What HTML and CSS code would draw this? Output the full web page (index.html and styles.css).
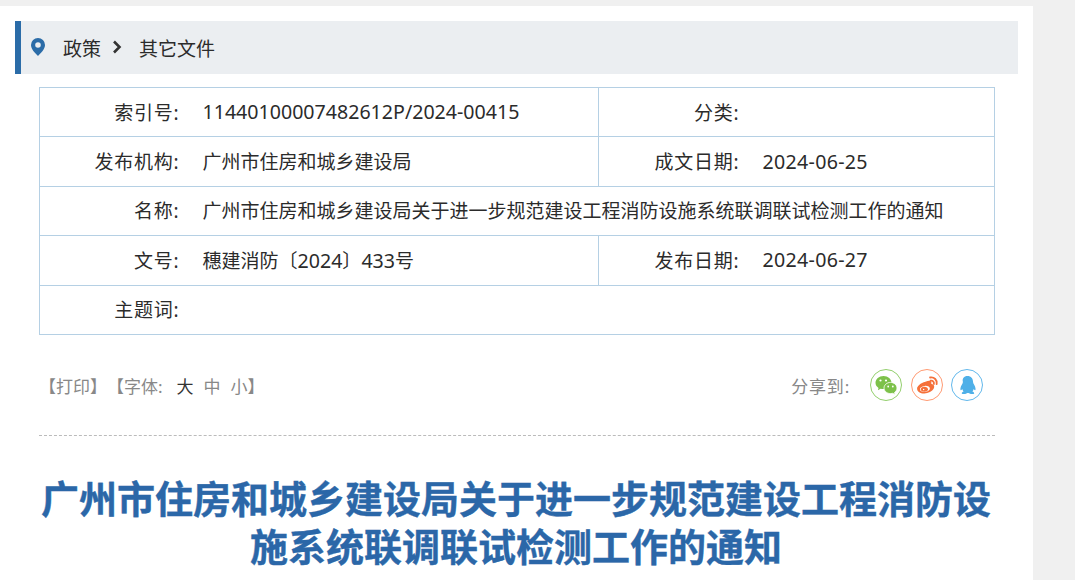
FILE: index.html
```html
<!DOCTYPE html>
<html lang="zh-CN">
<head>
<meta charset="utf-8">
<title>广州市住房和城乡建设局关于进一步规范建设工程消防设施系统联调联试检测工作的通知</title>
<link rel="stylesheet" href="styles.css">
</head>
<body>
<div class="shell">
<main class="panel">
  <nav class="crumbs">
    <svg class="pin" viewBox="0 0 14 18" width="14" height="18"><path fill="#2b6ca8" fill-rule="evenodd" d="M7 0a7 7 0 0 1 7 7c0 4-4 8-7 11C4 15 0 11 0 7a7 7 0 0 1 7-7zm0 4.200a2.800 2.800 0 1 0 0 5.600 2.800 2.800 0 0 0 0-5.600z"/></svg>
    <span class="crumb">政策</span>
    <svg class="chev" viewBox="0 0 10 14" width="10" height="14"><path fill="none" stroke="#333" stroke-width="2.600" d="M2 1.500 7.500 7 2 12.500"/></svg>
    <span class="crumb">其它文件</span>
  </nav>
  <table class="meta">
    <colgroup><col class="c1"><col class="c2"><col class="c3"><col class="c4"></colgroup>
    <tr><th>索引号:</th><td><span class="num">11440100007482612P/2024-00415</span></td><th>分类:</th><td></td></tr>
    <tr><th>发布机构:</th><td>广州市住房和城乡建设局</td><th>成文日期:</th><td><span class="num date">2024-06-25</span></td></tr>
    <tr><th>名称:</th><td colspan="3">广州市住房和城乡建设局关于进一步规范建设工程消防设施系统联调联试检测工作的通知</td></tr>
    <tr><th>文号:</th><td>穗建消防〔<span class="num">2024</span>〕<span class="num">433</span>号</td><th>发布日期:</th><td><span class="num date">2024-06-27</span></td></tr>
    <tr><th>主题词:</th><td colspan="3"></td></tr>
  </table>
  <div class="tools">
    <div class="print">【打印】【字体:<b class="size first">大</b><span class="size">中</span><span class="size last">小</span>】</div>
    <div class="share">
      <span class="share-label">分享到:</span>
      <span class="ico wx"><svg viewBox="0 0 24 24" width="24" height="24"><path fill="#7dc14a" d="M9.500 3C5 3 1.500 6 1.500 9.800c0 2.100 1.100 3.900 3 5.100l-.6 2.300 2.700-1.500c.9.300 1.900.4 2.900.4 4.500 0 8-3 8-6.300C17.500 6 14 3 9.500 3z"/><path fill="#7dc14a" stroke="#fff" stroke-width=".8" d="M23 15c0-3.100-3-5.600-6.500-5.600S10 11.900 10 15s3 5.600 6.500 5.600c.8 0 1.500-.1 2.200-.3l2.400 1.300-.6-2.100C22 18.400 23 16.800 23 15z"/><circle cx="6.500" cy="7.500" r="1.100" fill="#fff"/><circle cx="12" cy="7.500" r="1.100" fill="#fff"/><circle cx="14.200" cy="13.500" r=".9" fill="#fff"/><circle cx="18.800" cy="13.500" r=".9" fill="#fff"/></svg></span>
      <span class="ico wb"><svg viewBox="0 0 24 24" width="25" height="25"><path fill="#f5703a" d="M10 8.500c3.900-1.800 6.400-1.100 5.600 1.900 2.800.7 3.500 2.500 2.400 4.500-1.500 2.800-5.500 4.800-9.300 4.700-3.700-.1-6.700-1.800-6.700-4.600 0-2.300 3.300-5.300 8-6.500z"/><ellipse cx="9.500" cy="15.300" rx="4.800" ry="2.900" fill="#fff" transform="rotate(-8 9.500 15.300)"/><ellipse cx="9" cy="15.500" rx="3.400" ry="2.400" fill="#f5703a"/><circle cx="8.300" cy="15.800" r=".7" fill="#fff"/><path fill="none" stroke="#f5703a" stroke-width="1.800" stroke-linecap="round" d="M14.500 4.300c3.900-.7 7.100 2.500 6.300 6.400M15 7.400c1.900-.4 3.500 1.200 3.100 3.100"/></svg></span>
      <span class="ico qq"><svg viewBox="0 0 24 24" width="23" height="23"><path fill="#4fb0e8" d="M12 2c3.700 0 5.700 2.700 5.800 6.200 0 .6.100 1.100.4 1.700 1.200 2 2.500 4.500 2.200 6.400-.2 1-.9.800-1.900-.6-.2 1-.7 1.900-1.400 2.600.9.400 2 1 1.900 1.700-.1.800-2 1-3.600.8-.9-.1-1.600-.5-2.300-.9h-1.200c-.7.400-1.400.8-2.300.9-1.600.2-3.500 0-3.600-.8-.1-.7 1-1.300 1.900-1.700-.7-.7-1.200-1.600-1.400-2.600-1 1.400-1.700 1.600-1.900.6-.3-1.900 1-4.400 2.200-6.400.3-.6.400-1.100.4-1.700C6.300 4.700 8.300 2 12 2z"/></svg></span>
    </div>
  </div>
  <h1 class="title">广州市住房和城乡建设局关于进一步规范建设工程消防设施系统联调联试检测工作的通知</h1>
</main>
</div>
</body>
</html>
```
FILE: styles.css
```css
* { box-sizing: border-box; }
html, body { margin: 0; height: 580px; overflow: hidden; background: #fff; }
body { font-family: "Noto Sans", "Noto Sans CJK SC", sans-serif; color: #2b2b2b; text-spacing-trim: space-all; }
.shell { width: 1075px; height: 580px; background: #f0f0f0; padding-top: 6px; }
.panel { width: 1033px; height: 574px; background: #fff; padding-top: 15px; overflow: hidden; }
.crumbs { display: flex; align-items: center; width: 1003px; height: 53px; margin-left: 15px; background: #ebeef1; border-left: 6px solid #2b6ca8; padding-left: 10px; font-size: 19px; }
.pin { margin-right: 18px; margin-top: -1px; }
.chev { margin: -1px 17px 0 11px; }
.crumb { padding-top: 4px; line-height: 49px; }
.meta { width: 955px; margin: 13px 0 0 39px; border-collapse: collapse; table-layout: fixed; font-size: 19px; }
.meta th, .meta td { height: 49.4px; padding: 0 0 1px; border: 1px solid #b5d0e4; font-weight: 400; white-space: nowrap; }
.meta th { border-right: 0; text-align: right; letter-spacing: .8px; }
.meta td { border-left: 0; padding-left: 23px; }
.num { font-size: 19.600px; }
.date { letter-spacing: .3px; }
.c1 { width: 140px; }
.c2 { width: 419px; }
.c3 { width: 141px; }
.c4 { width: 255px; }
.meta tr td:nth-child(2) { border-right: 1px solid #b5d0e4; }
.meta tr th:nth-child(3) { border-left: 1px solid #b5d0e4; }
.tools { display: flex; justify-content: space-between; align-items: center; width: 956px; height: 101px; margin-left: 39px; border-bottom: 1px dashed #bbb; padding-top: 1px; color: #888; font-size: 17px; }
.print { white-space: nowrap; }
.size { display: inline-block; margin-right: 10px; font-weight: 400; color: #888; }
.size.first { color: #333; margin-left: 14px; }
.size.last { margin-right: 0; }
.share { display: flex; align-items: center; margin-right: 12px; }
.share-label { margin-right: 20px; letter-spacing: .8px; }
.ico { display: flex; align-items: center; justify-content: center; width: 32px; height: 32px; border-radius: 50%; border: 1.500px solid; margin-left: 9px; overflow: hidden; }
.wx { border-color: #93cf6d; margin-left: 0; }
.wb { border-color: #ff9a72; }
.qq { border-color: #62b8ec; margin-left: 8px; }
.title { width: 960px; margin: 38px 0 0 36px; font-size: 38px; line-height: 48px; font-weight: 700; color: #2b67a8; text-align: center; -webkit-text-stroke: .4px #2b67a8; }
```
